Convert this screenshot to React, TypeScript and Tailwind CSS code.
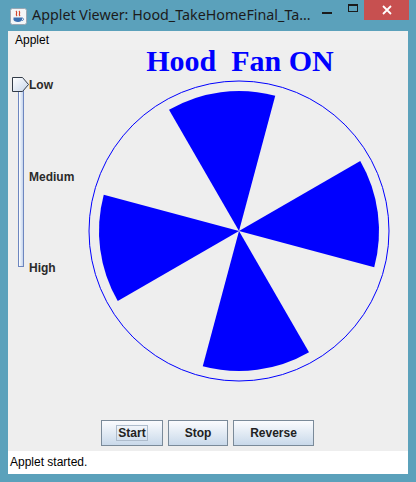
import React from 'react'

const BLUE = '#0000ff'

function wedge(cx: number, cy: number, r: number, a1: number, a2: number) {
    const rad = (a: number) => (a * Math.PI) / 180
    const x1 = cx + r * Math.cos(rad(a1))
    const y1 = cy - r * Math.sin(rad(a1))
    const x2 = cx + r * Math.cos(rad(a2))
    const y2 = cy - r * Math.sin(rad(a2))
    return `M ${cx} ${cy} L ${x1} ${y1} A ${r} ${r} 0 0 0 ${x2} ${y2} Z`
}

const blades = [
    [-15, 30],
    [75, 120],
    [165, 210],
    [255, 300],
]

function Fan() {
    return (
        <svg width={302} height={302} viewBox="0 0 302 302" className="block">
            <circle cx={151} cy={151} r={150} fill="none" stroke={BLUE} strokeWidth={1} />
            {blades.map(([a, b]) => (
                <path key={a} d={wedge(151, 151, 140, a, b)} fill={BLUE} />
            ))}
        </svg>
    )
}

function JavaIcon() {
    return (
        <svg width={17} height={17} viewBox="0 0 17 17">
            <rect x={0.5} y={0.5} width={16} height={16} rx={2} fill="#f4f6f8" stroke="#9aa6b2" />
            <path d="M6 3 C8 5 5 6 7 8 M9 3 C11 5 8 6 10 8" stroke="#d0452b" strokeWidth={1.2} fill="none" />
            <path d="M3.5 9.5 H12 V11.5 C12 13 10.5 14 8 14 C5.5 14 3.5 13 3.5 11.5 Z" fill="#3a6fb0" />
            <path d="M12 10 C14 10 14 12.5 12 12.5" stroke="#3a6fb0" strokeWidth={1} fill="none" />
        </svg>
    )
}

function Slider() {
    return (
        <div className="flex pl-[4px] pt-[27px] w-[80px] shrink-0">
            <div className="relative w-[17px]">
                <div className="ml-[6px] mt-[13px] w-[6px] h-[177px] border border-[#6d86bf] bg-gradient-to-r from-[#ffffff] to-[#c4d4ec]" />
                <svg width={17} height={16} viewBox="0 0 17 16" className="absolute top-0 left-0">
                    <defs>
                        <linearGradient id="th" x1="0" y1="0" x2="1" y2="1">
                            <stop offset="0" stopColor="#ffffff" />
                            <stop offset="1" stopColor="#c7d6ea" />
                        </linearGradient>
                    </defs>
                    <path d="M0.5 0.5 H10.5 L16.5 7.5 L10.5 14.5 H0.5 Z" fill="url(#th)" stroke="#333c48" strokeWidth={1} />
                </svg>
            </div>
            <div className="flex flex-col justify-between pt-[1px] h-[198px] text-[12px] leading-[14px] font-bold text-[#2a2a2a] font-['Liberation_Sans',sans-serif]">
                <span>Low</span>
                <span>Medium</span>
                <span>High</span>
            </div>
        </div>
    )
}

function JButton({ label, w, focused }: { label: string; w: number; focused?: boolean }) {
    return (
        <button
            className="h-[26px] border border-[#7a8a99] bg-gradient-to-b from-[#fbfcfe] to-[#c9d9ea] flex items-center justify-center text-[12px] font-bold text-[#222] font-['Liberation_Sans',sans-serif]"
            style={{ width: w }}
        >
            <span className={focused ? 'border border-[#aebccc] px-[1px] leading-[14px]' : 'leading-[14px]'}>{label}</span>
        </button>
    )
}

export default function App() {
    return (
        <div className="w-[416px] h-[482px] bg-[#5ba1bb] flex flex-col font-['Liberation_Sans',sans-serif]">
            <div className="h-[31px] flex items-start shrink-0">
                <div className="pl-[10px] pt-[8px]">
                    <JavaIcon />
                </div>
                <div className="pl-[5px] pt-[5px] text-[14.3px] leading-[20px] text-[#1b1b1b] font-['Noto_Sans',sans-serif] flex-1 whitespace-nowrap">
                    Applet Viewer: Hood_TakeHomeFinal_Ta...
                </div>
                <div className="w-[30px] h-[20px] flex items-center justify-center">
                    <div className="w-[10px] h-[2px] bg-[#1b1b1b] mt-[6px]" />
                </div>
                <div className="w-[22px] h-[20px] flex items-center justify-center">
                    <div className="w-[10px] h-[8px] border border-t-2 border-[#1b1b1b] mb-[4px]" />
                </div>
                <div className="w-[45px] h-[20px] mr-[7px] bg-[#c75050] flex items-center justify-center">
                    <svg width={10} height={10} viewBox="0 0 10 10">
                        <path d="M1 1 L9 9 M9 1 L1 9" stroke="#ffffff" strokeWidth={1.8} />
                    </svg>
                </div>
            </div>
            <div className="mx-[8px] w-[400px] flex flex-col">
                <div className="h-[19px] bg-[#f0f0f0] pl-[7px] text-[12px] leading-[19px] text-black">Applet</div>
                <div className="h-[401px] bg-[#eeeeee] flex flex-col">
                    <div className="h-[370px] flex">
                        <Slider />
                        <div className="flex flex-col w-[302px]">
                            <div className="h-[30px] pl-[2px] text-center text-[30px] leading-[21px] font-bold text-[#0000ff] font-['Liberation_Serif',serif] whitespace-pre">
                                Hood  Fan ON
                            </div>
                            <Fan />
                        </div>
                    </div>
                    <div className="h-[26px] flex justify-center gap-[5px] pr-[1px]">
                        <JButton label="Start" w={62} focused />
                        <JButton label="Stop" w={60} />
                        <JButton label="Reverse" w={81} />
                    </div>
                </div>
                <div className="h-[23px] bg-white pl-[2px] text-[12px] leading-[23px] text-black">Applet started.</div>
            </div>
        </div>
    )
}
